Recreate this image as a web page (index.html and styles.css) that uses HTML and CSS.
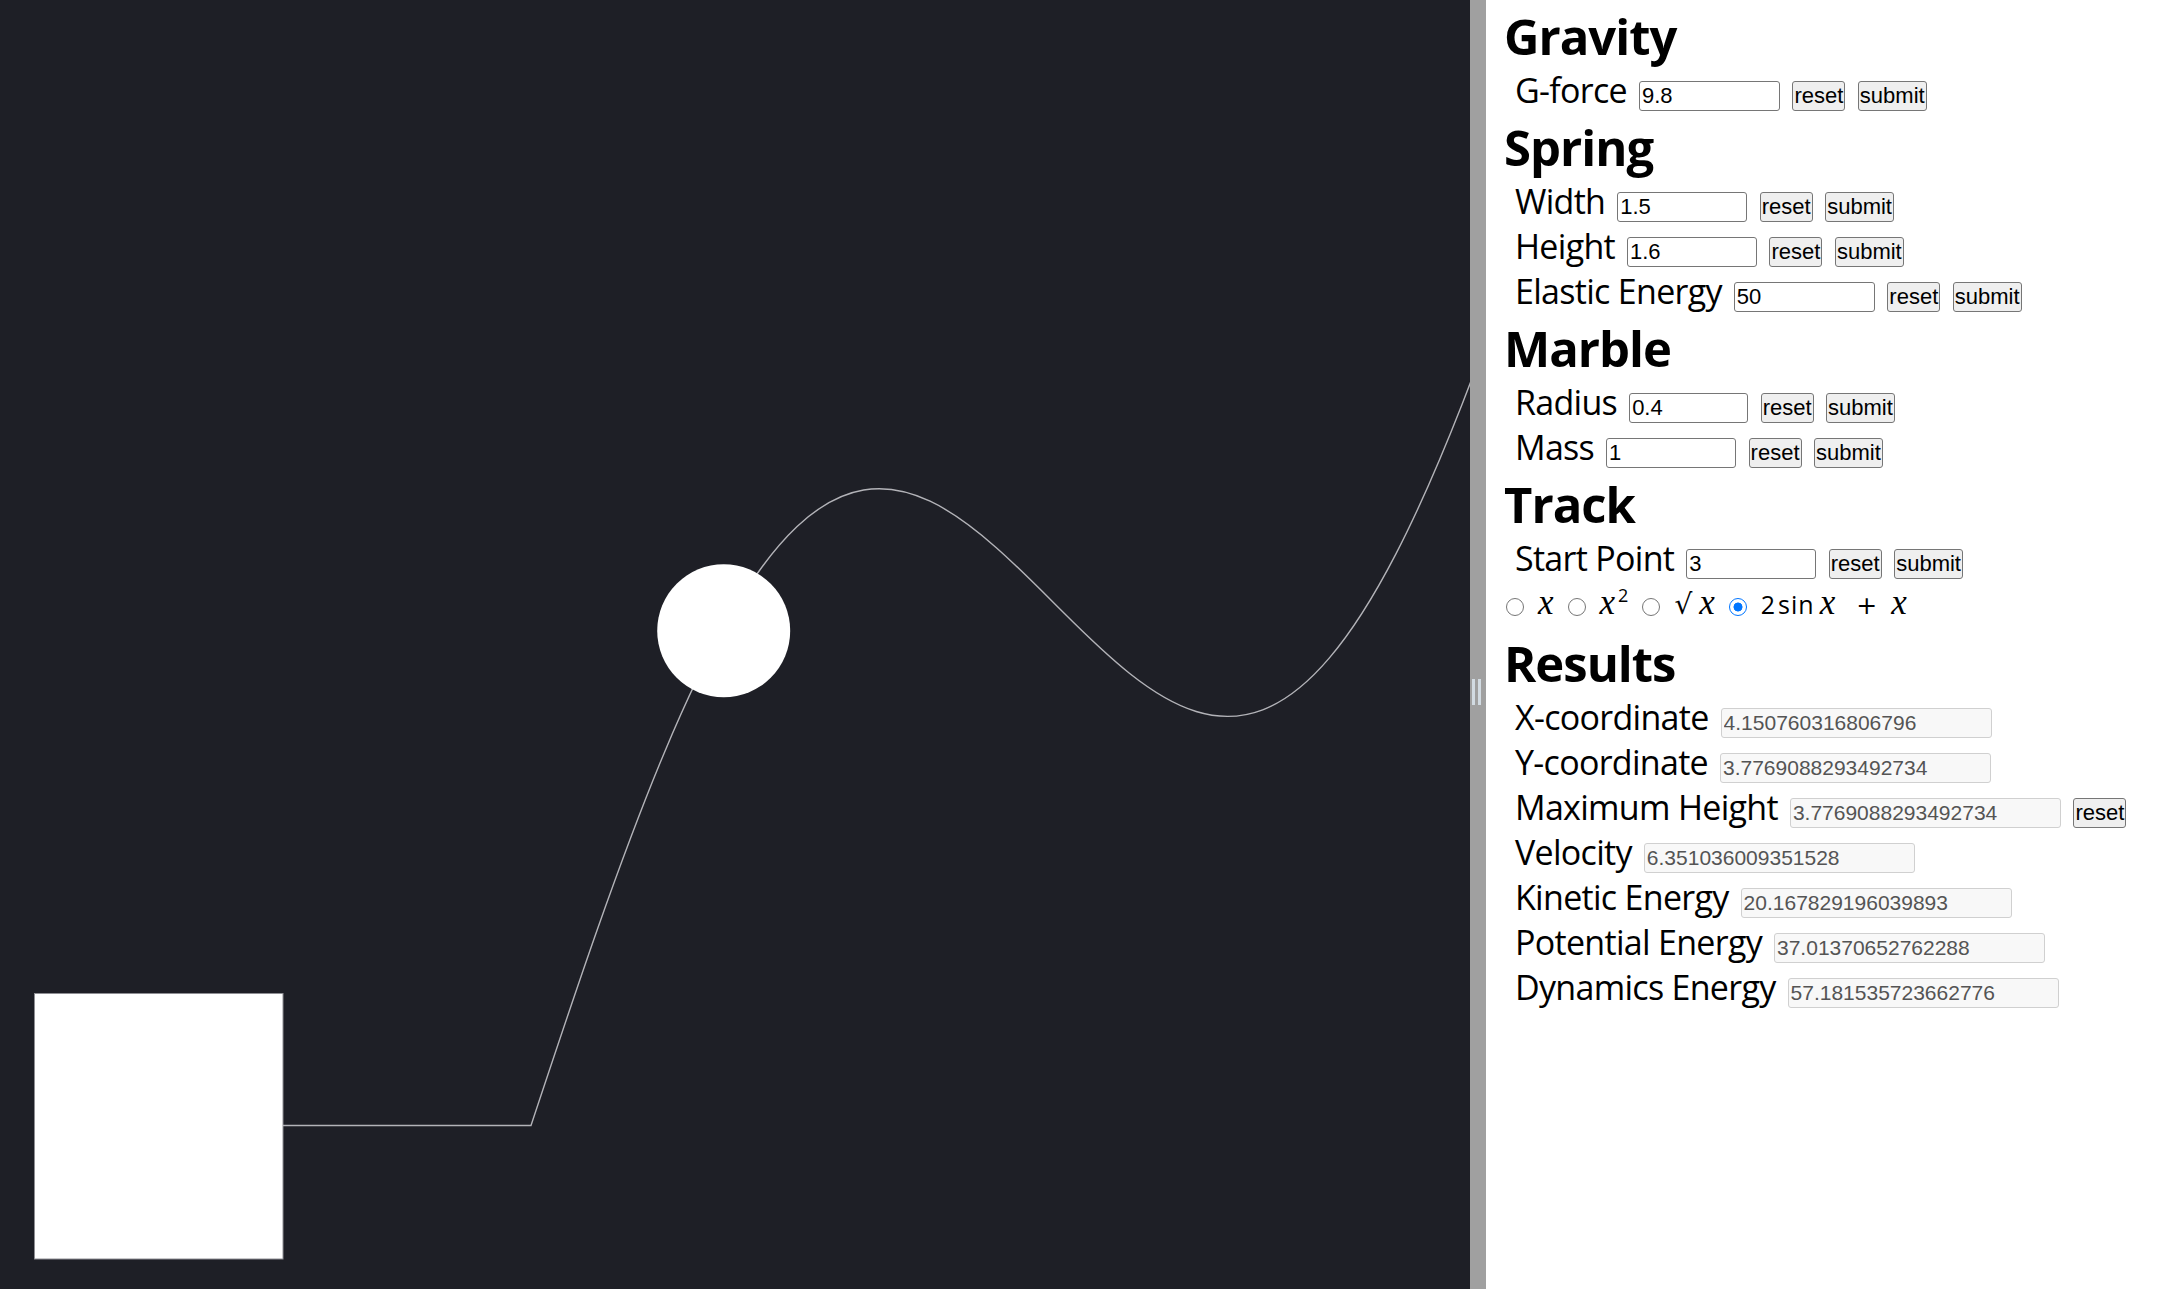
FILE: index.html
```html
<!DOCTYPE html>
<html lang="en">
<head>
<meta charset="utf-8">
<title>Marble Track Simulator</title>
<link rel="stylesheet" href="styles.css">
</head>
<body>
<div class="app">
  <main class="stage">
    <svg class="scene" width="1470" height="1289" viewBox="0 0 1470 1289">
      <rect class="spring" x="34.5" y="993.5" width="248.5" height="265.5"/>
      <path class="track" d="M283 1125.5 L531 1125.5 C553.2 1058.5 575.3 992.0 597.5 929.0 C619.7 866.0 641.8 806.5 664.0 753.4 C686.2 700.3 708.4 653.6 730.6 615.4 C752.8 577.2 774.9 547.4 797.1 526.5 C819.3 505.6 841.4 493.7 863.6 490.0 C885.8 486.3 907.9 490.7 930.1 501.2 C952.3 511.7 974.4 528.3 996.6 547.9 C1018.8 567.5 1041.0 590.2 1063.2 612.3 C1085.4 634.4 1107.5 655.9 1129.7 673.5 C1151.9 691.1 1174.0 704.7 1196.2 711.5 C1218.4 718.3 1240.5 718.3 1262.7 709.8 C1284.9 701.3 1307.0 684.2 1329.2 658.1 C1351.4 632.1 1373.6 597.0 1395.8 554.1 C1418.0 511.2 1440.1 460.3 1462.3 403.7 C1484.5 347.1 1506.6 284.8 1528.8 220.1"/>
      <circle class="marble" cx="723.7" cy="630.8" r="66.5"/>
    </svg>
  </main>

  <div class="splitter"><span class="grip"></span><span class="grip"></span></div>

  <aside class="panel">
    <section class="group">
      <h1 class="group-title">Gravity</h1>
      <div class="field">
        <label class="field-label" for="gforce">G-force</label>
        <input class="num num--lg" id="gforce" type="text" value="9.8">
        <button class="btn">reset</button>
        <button class="btn">submit</button>
      </div>
    </section>

    <section class="group">
      <h1 class="group-title">Spring</h1>
      <div class="field">
        <label class="field-label" for="sw">Width</label>
        <input class="num num--md" id="sw" type="text" value="1.5">
        <button class="btn">reset</button>
        <button class="btn">submit</button>
      </div>
      <div class="field">
        <label class="field-label" for="sh">Height</label>
        <input class="num num--md" id="sh" type="text" value="1.6">
        <button class="btn">reset</button>
        <button class="btn">submit</button>
      </div>
      <div class="field">
        <label class="field-label" for="se">Elastic Energy</label>
        <input class="num num--lg" id="se" type="text" value="50">
        <button class="btn">reset</button>
        <button class="btn">submit</button>
      </div>
    </section>

    <section class="group">
      <h1 class="group-title">Marble</h1>
      <div class="field">
        <label class="field-label" for="mr">Radius</label>
        <input class="num num--sm" id="mr" type="text" value="0.4">
        <button class="btn">reset</button>
        <button class="btn">submit</button>
      </div>
      <div class="field">
        <label class="field-label" for="mm">Mass</label>
        <input class="num num--md" id="mm" type="text" value="1">
        <button class="btn">reset</button>
        <button class="btn">submit</button>
      </div>
    </section>

    <section class="group">
      <h1 class="group-title">Track</h1>
      <div class="field">
        <label class="field-label" for="ts">Start Point</label>
        <input class="num num--md" id="ts" type="text" value="3">
        <button class="btn">reset</button>
        <button class="btn">submit</button>
      </div>
      <div class="track-options">
        <label class="opt">
          <input class="opt-radio" type="radio" name="track">
          <span class="opt-text"><i class="mi">x</i></span>
        </label>
        <label class="opt">
          <input class="opt-radio" type="radio" name="track">
          <span class="opt-text"><i class="mi">x</i><sup class="sup">2</sup></span>
        </label>
        <label class="opt">
          <input class="opt-radio" type="radio" name="track">
          <span class="opt-text"><span class="root">√</span><i class="mi">x</i></span>
        </label>
        <label class="opt">
          <input class="opt-radio" type="radio" name="track" checked>
          <span class="opt-text"><span class="mn">2</span><span class="fn">sin</span><i class="mi">x</i><span class="mo">+</span><i class="mi">x</i></span>
        </label>
      </div>
    </section>

    <section class="group">
      <h1 class="group-title">Results</h1>
      <div class="field">
        <label class="field-label" for="rx">X-coordinate</label>
        <input class="num num--out" id="rx" type="text" value="4.150760316806796" readonly>
      </div>
      <div class="field">
        <label class="field-label" for="ry">Y-coordinate</label>
        <input class="num num--out" id="ry" type="text" value="3.7769088293492734" readonly>
      </div>
      <div class="field">
        <label class="field-label" for="rm">Maximum Height</label>
        <input class="num num--out" id="rm" type="text" value="3.7769088293492734" readonly>
        <button class="btn">reset</button>
      </div>
      <div class="field">
        <label class="field-label" for="rv">Velocity</label>
        <input class="num num--out" id="rv" type="text" value="6.351036009351528" readonly>
      </div>
      <div class="field">
        <label class="field-label" for="rk">Kinetic Energy</label>
        <input class="num num--out" id="rk" type="text" value="20.167829196039893" readonly>
      </div>
      <div class="field">
        <label class="field-label" for="rp">Potential Energy</label>
        <input class="num num--out" id="rp" type="text" value="37.01370652762288" readonly>
      </div>
      <div class="field">
        <label class="field-label" for="rd">Dynamics Energy</label>
        <input class="num num--out" id="rd" type="text" value="57.181535723662776" readonly>
      </div>
    </section>
  </aside>
</div>
</body>
</html>
```

FILE: styles.css
```css
* {
  box-sizing: border-box;
}

html,
body {
  margin: 0;
  height: 100%;
}

body {
  background: #ffffff;
  color: #000000;
  font-family: "Open Sans", "Noto Sans", sans-serif;
  overflow: hidden;
}

.app {
  display: flex;
  height: 1289px;
}

/* ---------- simulation stage ---------- */
.stage {
  flex: none;
  width: 1470px;
  background: #1e1f26;
  overflow: hidden;
}

.scene {
  display: block;
}

.spring {
  fill: #ffffff;
  stroke: #8e8e93;
  stroke-width: 1;
}

.track {
  fill: none;
  stroke: #b3b3b8;
  stroke-width: 1.4;
}

.marble {
  fill: #ffffff;
}

/* ---------- splitter ---------- */
.splitter {
  flex: none;
  width: 16px;
  background: #a0a0a0;
  display: flex;
  align-items: flex-start;
  gap: 3px;
  padding: 679px 0 0 2px;
}

.grip {
  width: 3px;
  height: 26px;
  background: #d2dbe2;
}

/* ---------- control panel ---------- */
.panel {
  flex: 1;
  padding: 6px 0 0 18px;
  overflow: hidden;
}

.group {
  margin-bottom: 6px;
}

.group-title {
  margin: 0;
  font-size: 49px;
  line-height: 60px;
  font-weight: 700;
  letter-spacing: -1px;
}

.field {
  display: flex;
  align-items: baseline;
  height: 30px;
  margin-top: 15px;
  padding-left: 11px;
}

.field-label {
  font-size: 34px;
  line-height: 17px;
  letter-spacing: -0.7px;
  margin-right: 12px;
  white-space: nowrap;
}

.num {
  flex: none;
  height: 30px;
  margin: 0 12.5px 0 0;
  padding: 1px 2px;
  border: 1px solid #767676;
  border-radius: 3px;
  background: #ffffff;
  color: #000000;
  font-family: "Liberation Sans", Arial, sans-serif;
  font-size: 22px;
}

.num--lg {
  width: 141px;
}

.num--md {
  width: 130px;
}

.num--sm {
  width: 119px;
}

.num--out {
  width: 271px;
  background: #f8f8f8;
  border-color: #d0d0d0;
  color: #545454;
  font-size: 21px;
}

.btn {
  flex: none;
  height: 30px;
  margin: 0 12.5px 0 0;
  padding: 0 1px;
  border: 1px solid #767676;
  border-radius: 3px;
  background: #efefef;
  color: #000000;
  font-family: "Liberation Sans", Arial, sans-serif;
  font-size: 22px;
}

/* ---------- track function options ---------- */
.track-options {
  display: flex;
  align-items: center;
  height: 25px;
  margin: 15px 0 14px;
}

.opt {
  display: flex;
  align-items: center;
  margin-right: 12px;
}

.opt-radio {
  -webkit-appearance: none;
  appearance: none;
  flex: none;
  width: 18px;
  height: 18px;
  margin: 0 14px 0 2px;
  border: 1.5px solid #767676;
  border-radius: 50%;
  background: #ffffff;
}

.opt-radio:checked {
  border-color: #0075ff;
  background: radial-gradient(circle, #0075ff 0 4.2px, #ffffff 4.8px);
}

.opt-text {
  font-size: 25px;
  line-height: 25px;
  padding-bottom: 6px;
  white-space: nowrap;
}

.mi {
  font-family: "Liberation Serif", "Times New Roman", serif;
  font-style: italic;
  font-size: 35px;
}

.sup {
  font-size: 18px;
  line-height: 0;
  margin-left: 3px;
  vertical-align: 12px;
}

.root {
  font-family: "DejaVu Sans", sans-serif;
  font-size: 28px;
  margin-right: 7px;
}

.mn {
  margin-right: 3px;
}

.fn {
  letter-spacing: 1px;
  margin-right: 5px;
}

.mo {
  font-family: "DejaVu Sans", sans-serif;
  margin: 0 14px 0 21px;
}
```
